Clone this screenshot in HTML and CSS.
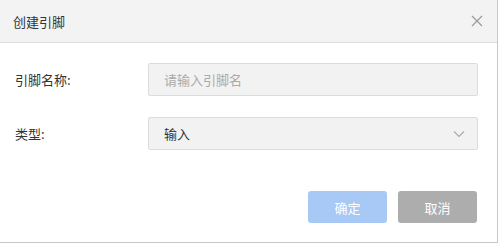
FILE: index.html
```html
<!DOCTYPE html>
<html lang="zh-CN">
<head>
    <meta charset="UTF-8">
    <title>创建引脚</title>
    <link rel="stylesheet" href="styles.css">
</head>
<body>
    <div class="dialog">
        <div class="dialog-header">
            <span class="dialog-title">创建引脚</span>
            <span class="dialog-close">
                <svg width="12" height="12" viewBox="0 0 12 12"><path d="M1 1L11 11M11 1L1 11" stroke="#9a9a9a" stroke-width="1.2" fill="none"/></svg>
            </span>
        </div>
        <div class="dialog-body">
            <div class="form-row">
                <label class="form-label">引脚名称:</label>
                <input class="form-input" type="text" placeholder="请输入引脚名">
            </div>
            <div class="form-row">
                <label class="form-label">类型:</label>
                <div class="form-select">
                    <span>输入</span>
                    <svg width="12" height="8" viewBox="0 0 12 8"><path d="M1 1.5L6 6.5L11 1.5" stroke="#aaa" stroke-width="1.1" fill="none"/></svg>
                </div>
            </div>
        </div>
        <div class="dialog-footer">
            <button class="btn btn-ok">确定</button>
            <button class="btn btn-cancel">取消</button>
        </div>
    </div>
</body>
</html>
```

FILE: styles.css
```css
body {
    margin: 0;
    font-family: "Noto Sans CJK SC", "Noto Sans", sans-serif;
    font-size: 13px;
    color: #333;
    background: #fff;
}

.dialog {
    width: 497px;
    height: 242px;
    border-right: 1px solid #c8c8c8;
    border-bottom: 1px solid #c8c8c8;
    background: #fff;
    display: flex;
    flex-direction: column;
}

.dialog-header {
    height: 42px;
    background: #f3f3f3;
    border-bottom: 1px solid #dcdcdc;
    display: flex;
    align-items: center;
    justify-content: space-between;
    padding: 0 14px 0 13px;
}

.dialog-title {
    font-size: 13px;
    color: #333;
}

.dialog-close {
    display: flex;
    width: 12px;
    height: 12px;
}

.dialog-body {
    padding: 20px 19px 0 15px;
}

.form-row {
    display: flex;
    align-items: center;
    margin-bottom: 21px;
}

.form-label {
    width: 133px;
    color: #333;
}

.form-input,
.form-select {
    flex: 1;
    height: 33px;
    box-sizing: border-box;
    background: #f2f2f2;
    border: 1px solid #dcdcdc;
    border-radius: 2px;
    padding: 0 15px;
    font-family: inherit;
    font-size: 13px;
    color: #333;
    outline: none;
}

.form-input::placeholder {
    color: #aaa;
}

.form-select {
    display: flex;
    align-items: center;
    justify-content: space-between;
    padding-right: 12px;
}

.dialog-footer {
    display: flex;
    justify-content: flex-end;
    gap: 11px;
    padding: 20px 20px 0 0;
}

.btn {
    width: 79px;
    height: 32px;
    border: none;
    border-radius: 3px;
    color: #fff;
    font-family: inherit;
    font-size: 13px;
    cursor: pointer;
}

.btn-ok {
    background: #a8c8f5;
}

.btn-cancel {
    background: #adadad;
}
```
